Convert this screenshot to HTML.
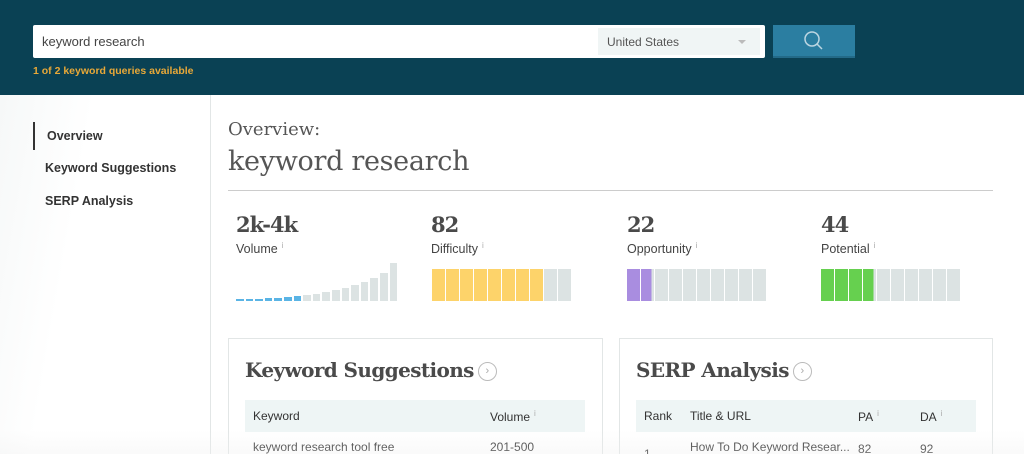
<!DOCTYPE html>
<html><head><style>
*{margin:0;padding:0;box-sizing:border-box}
html,body{width:1024px;height:454px;overflow:hidden}
body{background:#fff;font-family:"Liberation Sans",sans-serif;color:#444;position:relative}
.hdr{position:absolute;left:0;top:0;width:1024px;height:95px;background:#0a4154}
.inp{position:absolute;left:33px;top:25px;width:732px;height:33px;background:#fff;border-radius:2px}
.inp .t{position:absolute;left:9px;top:9px;font-size:13px;color:#444}
.sel{position:absolute;left:565px;top:3px;width:162px;height:27px;background:#f0f5f5;font-size:12px;color:#555;padding:7px 9px}
.sel:after{content:"";position:absolute;right:14px;top:12px;border:4px solid transparent;border-top-color:#bbb}
.btn{position:absolute;left:773px;top:25px;width:82px;height:33px;background:#2b7ea1;border-bottom:2px solid #236a88}
.avail{position:absolute;left:33px;top:65px;font-size:10.5px;font-weight:bold;color:#e8a838}
.side{position:absolute;left:0;top:95px;width:211px;height:359px;border-right:1px solid #e2e6e6;background:linear-gradient(100deg,#f6f8f8 0,#fff 35%)}
.si{position:absolute;left:33px;font-size:12.5px;font-weight:bold;color:#333;padding-left:12px}
.si.a{border-left:2px solid #333;height:28px;line-height:28px}
.ov{position:absolute;left:228px;top:119px;font-size:18px;color:#555;font-family:"DejaVu Serif",serif}
.kw{position:absolute;left:228px;top:146px;font-size:27px;color:#555;font-family:"DejaVu Serif",serif;letter-spacing:-.3px}
.line{position:absolute;left:228px;top:190px;width:765px;height:1px;background:#ccc}
.num{position:absolute;top:212px;font-size:21px;font-weight:bold;color:#4a4a4a;font-family:"DejaVu Serif",serif;letter-spacing:-1px}
.lab{position:absolute;top:241px;font-size:12.5px;color:#444}
.lab sup{font-size:8px;color:#aaa;margin-left:4px}
.bars{position:absolute;top:269px;height:32px;display:flex;gap:1px;align-items:flex-end}
.bars div{width:13px;height:32px;background:#dce3e3}
.vb{position:absolute;top:262px;left:236px;height:39px;display:flex;gap:2px;align-items:flex-end}
.vb div{width:7.6px;background:#dce3e3}
.vb div.b{background:#5ab4e5}
.card{position:absolute;top:338px;height:130px;border:1px solid #e2e6e6}
.ct{position:absolute;left:16px;top:19px;font-size:20px;font-weight:bold;color:#4a4a4a;font-family:"DejaVu Serif",serif;letter-spacing:-.6px;white-space:nowrap}
.circ{display:inline-block;width:19px;height:19px;border:1px solid #bbb;border-radius:50%;vertical-align:middle;font-size:11px;color:#aaa;text-align:center;line-height:17px;font-weight:normal;margin-left:4px;font-family:"Liberation Sans";letter-spacing:0}
.th{position:absolute;left:16px;top:61px;height:32px;background:#eef5f5;font-size:12px;color:#333}
.th span,.row span{position:absolute;top:9px;white-space:nowrap}
.th sup{font-size:8px;color:#aaa;margin-left:4px}
.row{position:absolute;left:16px;top:92px;font-size:12px;color:#333;width:340px}
.fade{position:absolute;left:0;top:430px;width:1024px;height:24px;background:linear-gradient(rgba(255,255,255,0),rgba(240,240,240,.35))}
</style></head><body>
<div class="hdr">
<div class="inp"><div class="t">keyword research</div><div class="sel">United States</div></div>
<div class="btn"><svg width="82" height="31" viewBox="0 0 82 31"><circle cx="39" cy="14" r="7" fill="none" stroke="#bcd6e2" stroke-width="1.5"/><line x1="44" y1="19" x2="49" y2="24" stroke="#bcd6e2" stroke-width="1.5"/></svg></div>
<div class="avail">1 of 2 keyword queries available</div>
</div>
<div class="side">
<div class="si a" style="top:27px">Overview</div>
<div class="si" style="top:66px">Keyword Suggestions</div>
<div class="si" style="top:99px">SERP Analysis</div>
</div>
<div class="ov">Overview:</div>
<div class="kw">keyword research</div>
<div class="line"></div>

<div class="num" style="left:236px">2k-4k</div>
<div class="lab" style="left:236px">Volume<sup>i</sup></div>
<div class="vb">
<div class="b" style="height:2px"></div><div class="b" style="height:2px"></div><div class="b" style="height:2px"></div><div class="b" style="height:3px"></div><div class="b" style="height:3px"></div><div class="b" style="height:4px"></div><div class="b" style="height:5px"></div><div style="height:6px"></div><div style="height:7px"></div><div style="height:9px"></div><div style="height:11px"></div><div style="height:13px"></div><div style="height:16px"></div><div style="height:19px"></div><div style="height:23px"></div><div style="height:28px"></div><div style="height:38px"></div>
</div>

<div class="num" style="left:431px">82</div>
<div class="lab" style="left:431px">Difficulty<sup>i</sup></div>
<div class="bars" style="left:432px"><div style="background:#fdd36a"></div><div style="background:#fdd36a"></div><div style="background:#fdd36a"></div><div style="background:#fdd36a"></div><div style="background:#fdd36a"></div><div style="background:#fdd36a"></div><div style="background:#fdd36a"></div><div style="background:#fdd36a"></div><div></div><div></div></div>

<div class="num" style="left:627px">22</div>
<div class="lab" style="left:627px">Opportunity<sup>i</sup></div>
<div class="bars" style="left:627px"><div style="background:#a98de0"></div><div style="background:linear-gradient(90deg,#a98de0 80%,#dce3e3 80%)"></div><div></div><div></div><div></div><div></div><div></div><div></div><div></div><div></div></div>

<div class="num" style="left:821px">44</div>
<div class="lab" style="left:821px">Potential<sup>i</sup></div>
<div class="bars" style="left:821px"><div style="background:#66d04f"></div><div style="background:#66d04f"></div><div style="background:#66d04f"></div><div style="background:linear-gradient(90deg,#66d04f 80%,#dce3e3 80%)"></div><div></div><div></div><div></div><div></div><div></div><div></div></div>

<div class="card" style="left:228px;width:375px">
<div class="ct">Keyword Suggestions<span class="circ">›</span></div>
<div class="th" style="width:340px"><span style="left:8px">Keyword</span><span style="left:245px">Volume<sup>i</sup></span></div>
<div class="row"><span style="left:8px">keyword research tool free</span><span style="left:245px">201-500</span></div>
</div>
<div class="card" style="left:619px;width:374px">
<div class="ct">SERP Analysis<span class="circ">›</span></div>
<div class="th" style="width:340px"><span style="left:8px">Rank</span><span style="left:54px">Title &amp; URL</span><span style="left:222px">PA<sup>i</sup></span><span style="left:284px">DA<sup>i</sup></span></div>
<div class="row"><span style="left:8px;top:16px">1</span><span style="left:54px">How To Do Keyword Resear...</span><span style="left:222px;top:11px">82</span><span style="left:284px;top:11px">92</span></div>
</div>
<div class="fade"></div>
</body></html>
